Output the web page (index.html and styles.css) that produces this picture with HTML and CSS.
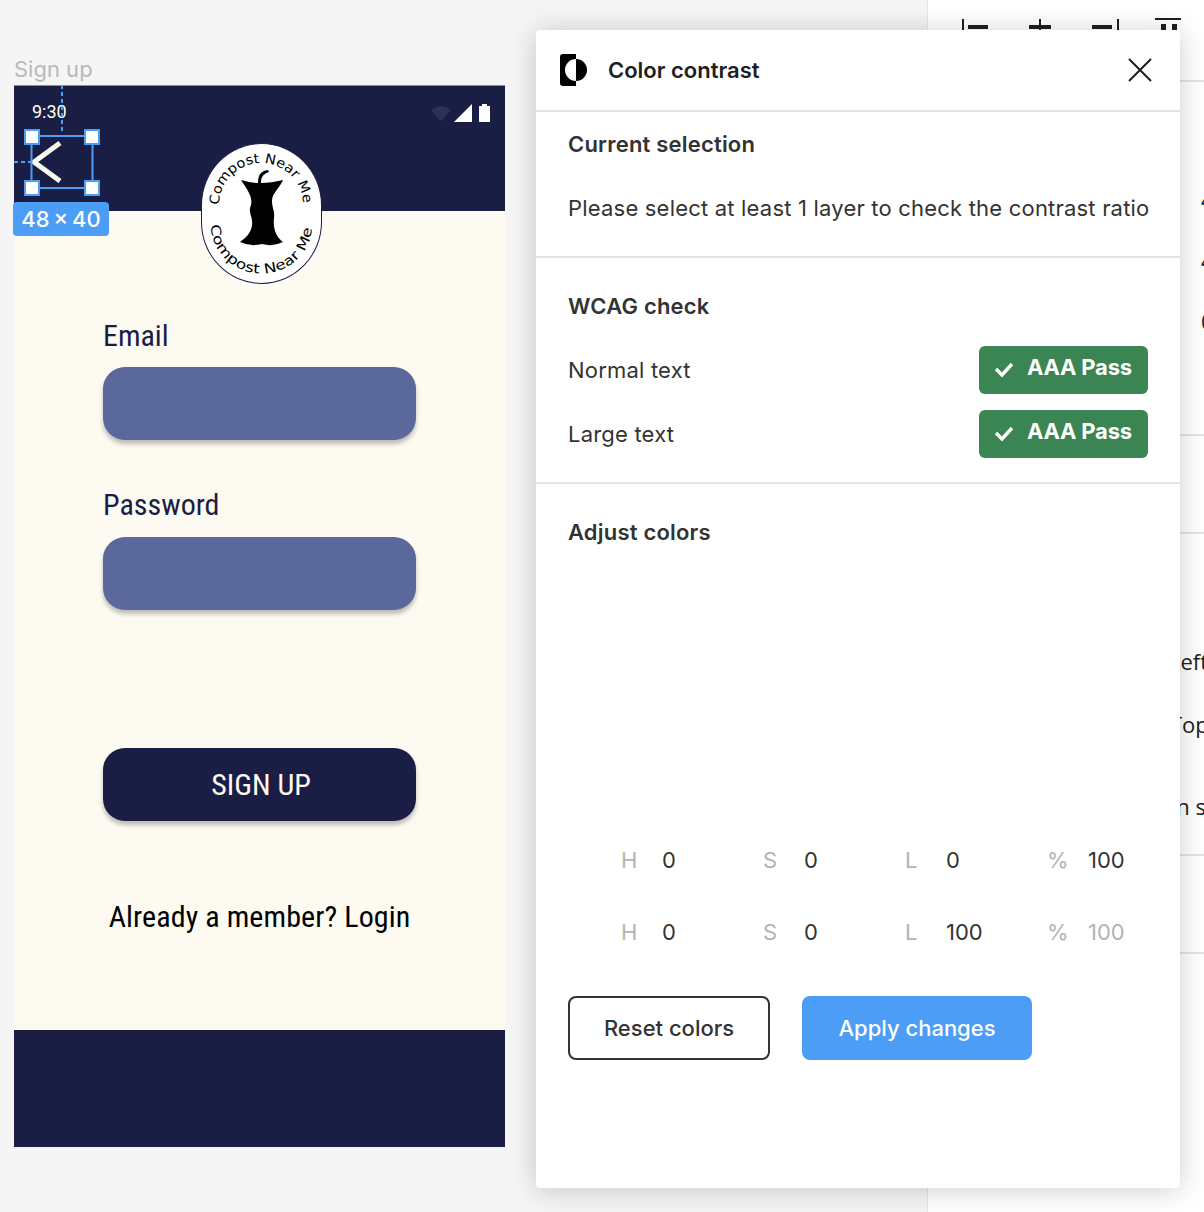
FILE: index.html
```html
<!DOCTYPE html>
<html lang="en">

<head>
    <meta charset="UTF-8">
    <meta name="viewport" content="width=device-width, initial-scale=1.0">
    <title>Sign up - Color contrast</title>
    <link rel="stylesheet" href="styles.css">
</head>

<body>
    <!-- Right properties panel, mostly behind the plugin window -->
    <aside class="side-panel">
        <div class="side-tools">
            <svg class="tool-icons" width="276" height="40" viewBox="0 0 276 40" fill="#1e1e1e">
                <rect x="34" y="19" width="2" height="11"/>
                <rect x="40" y="25" width="20" height="4"/>
                <rect x="101" y="25" width="22" height="4"/>
                <rect x="111" y="19" width="2" height="11"/>
                <rect x="164" y="25" width="20" height="4"/>
                <rect x="189" y="19" width="2" height="11"/>
                <rect x="227" y="18" width="26" height="2"/>
                <rect x="233" y="24" width="5" height="8"/>
                <rect x="244" y="24" width="5" height="8"/>
            </svg>
        </div>
        <div class="side-section side-section-top">
            <span class="peek peek-a">4</span>
            <span class="peek peek-b">4</span>
            <span class="peek peek-c">0</span>
        </div>
        <div class="side-section side-section-thin"></div>
        <div class="side-section side-section-text">
            <span class="behind behind-left">Left</span>
            <span class="behind behind-top">Top</span>
            <span class="behind behind-design">Design system</span>
        </div>
        <div class="side-section side-section-thin"></div>
    </aside>

    <!-- Artboard -->
    <div class="frame-title">Sign up</div>
    <div class="artboard">
        <header class="app-header">
            <span class="status-time">9:30</span>
            <div class="status-icons">
                <svg width="20" height="18" viewBox="0 0 22 18"><path d="M0 6 Q11 -3 22 6 L11 18 Z" fill="#2d3157"/></svg>
                <svg width="18" height="18" viewBox="0 0 18 18"><path d="M18 0 V18 H0 Z" fill="#fff"/></svg>
                <svg width="11" height="18" viewBox="0 0 11 18"><path d="M3 2 V0 H8 V2 H11 V18 H0 V2 Z" fill="#fff"/></svg>
            </div>
        </header>
        <main class="app-form">
            <label class="field-label">Email</label>
            <div class="field-input"></div>
            <label class="field-label field-label-next">Password</label>
            <div class="field-input"></div>
            <div class="signup-btn">SIGN UP</div>
            <p class="login-text">Already a member? Login</p>
        </main>
        <footer class="app-footer"></footer>

        <!-- Logo sits over the header edge -->
        <div class="logo">
            <svg width="121" height="141" viewBox="0 0 121 141">
                <defs>
                    <path id="arc-top" d="M18 62 A 42 42 0 0 1 102 62"/>
                    <path id="arc-bottom" d="M10 82 A 50 48 0 0 0 111 82"/>
                </defs>
                <text class="logo-text"><textPath href="#arc-top" textLength="130" lengthAdjust="spacingAndGlyphs">Compost Near Me</textPath></text>
                <text class="logo-text"><textPath href="#arc-bottom" textLength="152" lengthAdjust="spacingAndGlyphs">Compost Near Me</textPath></text>
                <path d="M40 37 Q50 40 57 40 C57 33 59 28 67 27 L68 29 C62 31 60 34 60 40 Q70 40 82 37 C78 46 71 50 71 58 C71 65 74 68 73 75 C72 84 74 93 82 99 Q72 104 61 101 Q50 104 39 99 C48 93 52 86 51 78 C51 72 47 70 50 62 C52 54 46 46 40 37 Z" fill="#000"/>
            </svg>
        </div>

        <!-- Back chevron with the selection overlay -->
        <svg class="selection" width="110" height="120" viewBox="0 0 110 120">
            <path d="M46 58 L20 77 L46 96" fill="none" stroke="#fdfaf1" stroke-width="5"/>
            <path d="M48 0 V47 M0 77 H17" fill="none" stroke="#4c9df5" stroke-width="2" stroke-dasharray="4 3"/>
            <rect x="17.5" y="51" width="61" height="52" fill="none" stroke="#4c9df5" stroke-width="2"/>
            <rect class="handle" x="11" y="45" width="14" height="14"/>
            <rect class="handle" x="71" y="45" width="14" height="14"/>
            <rect class="handle" x="11" y="96" width="14" height="14"/>
            <rect class="handle" x="71" y="96" width="14" height="14"/>
        </svg>
        <div class="size-badge">48 × 40</div>
    </div>

    <!-- Plugin window -->
    <section class="plugin">
        <div class="plugin-head">
            <svg width="28" height="32" viewBox="0 0 28 32">
                <path d="M3 0 H16 V32 H3 Q0 32 0 29 V3 Q0 0 3 0 Z" fill="#000"/>
                <path d="M16 5 A 11 11 0 0 0 16 27 Z" fill="#fff"/>
                <path d="M16 5 A 11 11 0 0 1 16 27 Z" fill="#000"/>
            </svg>
            <h1>Color contrast</h1>
            <svg class="close-icon" width="24" height="24" viewBox="0 0 24 24">
                <path d="M1 1 L23 23 M23 1 L1 23" stroke="#1e1e1e" stroke-width="2" fill="none"/>
            </svg>
        </div>

        <div class="plugin-section section-selection">
            <h2>Current selection</h2>
            <p class="selection-note">Please select at least 1 layer to check the contrast ratio</p>
        </div>

        <div class="plugin-section section-wcag">
            <h2>WCAG check</h2>
            <div class="wcag-row wcag-row-first">
                <span>Normal text</span>
                <span class="pass-badge">
                    <svg width="20" height="16" viewBox="0 0 20 16"><path d="M2 8 L8 14 L18 3" fill="none" stroke="#fff" stroke-width="3.4"/></svg>
                    AAA Pass
                </span>
            </div>
            <div class="wcag-row">
                <span>Large text</span>
                <span class="pass-badge">
                    <svg width="20" height="16" viewBox="0 0 20 16"><path d="M2 8 L8 14 L18 3" fill="none" stroke="#fff" stroke-width="3.4"/></svg>
                    AAA Pass
                </span>
            </div>
        </div>

        <div class="plugin-section section-adjust">
            <h2>Adjust colors</h2>
            <div class="hsl-row hsl-row-first">
                <div class="hsl-cell"><span class="hsl-key">H</span><span>0</span></div>
                <div class="hsl-cell"><span class="hsl-key">S</span><span>0</span></div>
                <div class="hsl-cell"><span class="hsl-key">L</span><span>0</span></div>
                <div class="hsl-cell"><span class="hsl-key">%</span><span>100</span></div>
            </div>
            <div class="hsl-row">
                <div class="hsl-cell"><span class="hsl-key">H</span><span>0</span></div>
                <div class="hsl-cell"><span class="hsl-key">S</span><span>0</span></div>
                <div class="hsl-cell"><span class="hsl-key">L</span><span>100</span></div>
                <div class="hsl-cell"><span class="hsl-key">%</span><span class="hsl-key">100</span></div>
            </div>
            <div class="plugin-actions">
                <button class="btn-reset">Reset colors</button>
                <button class="btn-apply">Apply changes</button>
            </div>
        </div>
    </section>
</body>

</html>
```

FILE: styles.css
```css
* {
    box-sizing: border-box;
    margin: 0;
    padding: 0;
}

body {
    position: relative;
    width: 1204px;
    height: 1212px;
    overflow: hidden;
    background: #f5f5f5;
    font-family: Inter, sans-serif;
}

/* Right panel */

.side-panel {
    position: absolute;
    top: 0;
    left: 927px;
    width: 277px;
    height: 1212px;
    background: #fff;
    border-left: 1px solid #e5e5e5;
    font-family: "Open Sans", sans-serif;
    font-size: 22px;
    color: #222;
    white-space: nowrap;
    overflow: hidden;
}

.side-tools {
    height: 82px;
    border-bottom: 2px solid #e5e5e5;
}

.tool-icons {
    display: block;
}

.side-section {
    border-bottom: 2px solid #e5e5e5;
    position: relative;
}

.side-section-top {
    height: 354px;
}

.side-section-thin {
    height: 98px;
}

.side-section-text {
    height: 322px;
}

.peek,
.behind {
    position: absolute;
}

.peek-a {
    top: 102px;
    left: 273px;
}

.peek-b {
    top: 163px;
    left: 273px;
}

.peek-c {
    top: 224px;
    left: 273px;
}

.behind-left {
    top: 112px;
    left: 241px;
}

.behind-top {
    top: 175px;
    left: 242px;
}

.behind-design {
    top: 257px;
    left: 192px;
}

/* Artboard */

.frame-title {
    position: absolute;
    top: 56px;
    left: 14px;
    font-size: 22px;
    line-height: 26px;
    color: #b9b9b9;
}

.artboard {
    position: absolute;
    top: 85px;
    left: 14px;
    width: 491px;
    height: 1062px;
    display: flex;
    flex-direction: column;
    font-family: "Roboto Condensed", "Liberation Sans Narrow", Roboto, sans-serif;
    font-stretch: condensed;
}

.app-header {
    height: 126px;
    background: #1a1e45;
    border-top: 1px solid #8c8ea0;
    display: flex;
    justify-content: space-between;
    align-items: flex-start;
    padding: 16px 15px 0 18px;
}

.status-time {
    font-family: Roboto, sans-serif;
    font-stretch: normal;
    font-size: 18px;
    line-height: 20px;
    color: #fff;
}

.status-icons {
    display: flex;
    gap: 3px;
    margin-top: 2px;
}

.status-icons svg:last-child {
    margin-left: 4px;
}

.app-form {
    flex: 1;
    background: #fdfaf1;
    padding: 107px 89px 0 89px;
    color: #1a1e45;
}

.field-label {
    display: block;
    font-size: 30px;
    line-height: 36px;
    margin-bottom: 13px;
}

.field-label-next {
    margin-top: 47px;
    margin-bottom: 14px;
}

.field-input {
    height: 73px;
    background: #5a689b;
    border-radius: 22px;
    box-shadow: 0 4px 4px rgba(0, 0, 0, 0.25);
}

.signup-btn {
    height: 73px;
    margin-top: 138px;
    padding-left: 3px;
    background: #1a1e45;
    border-radius: 22px;
    box-shadow: 0 4px 4px rgba(0, 0, 0, 0.25);
    color: #fdfaf1;
    font-size: 30px;
    line-height: 73px;
    text-align: center;
}

.login-text {
    margin-top: 78px;
    font-size: 30px;
    letter-spacing: 0.1px;
    line-height: 36px;
    color: #000;
    text-align: center;
    white-space: nowrap;
}

.app-footer {
    height: 117px;
    background: #1a1e45;
}

.logo {
    position: absolute;
    top: 58px;
    left: 187px;
    width: 121px;
    height: 141px;
    background: #fff;
    border: 1px solid #1a1e45;
    border-radius: 50% / 44%;
}

.logo svg {
    display: block;
    margin: -1px;
}

.logo-text {
    font-family: "DejaVu Sans", sans-serif;
    font-stretch: normal;
    font-size: 13.5px;
    fill: #000;
}

.selection {
    position: absolute;
    top: 0;
    left: 0;
}

.handle {
    fill: #fff;
    stroke: #4c9df5;
    stroke-width: 2;
}

.size-badge {
    position: absolute;
    top: 117px;
    left: -1px;
    width: 96px;
    height: 34px;
    background: #4c9df5;
    border-radius: 4px;
    color: #fff;
    font-family: Inter, sans-serif;
    font-stretch: normal;
    font-size: 22px;
    font-weight: 500;
    word-spacing: -2px;
    line-height: 34px;
    text-align: center;
}

/* Plugin window */

.plugin {
    position: absolute;
    top: 30px;
    left: 536px;
    width: 644px;
    height: 1158px;
    background: #fff;
    border-radius: 4px;
    box-shadow: 0 2px 28px rgba(0, 0, 0, 0.2);
    color: #333;
    font-size: 22px;
}

.plugin-head {
    height: 82px;
    border-bottom: 2px solid #e5e5e5;
    display: flex;
    align-items: center;
    padding: 0 28px 0 24px;
}

.plugin-head h1 {
    flex: 1;
    margin-left: 20px;
    font-size: 22px;
    font-weight: 600;
    line-height: 26px;
    color: #1e1e1e;
}

.close-icon {
    display: block;
}

.plugin-section {
    padding: 0 32px;
    border-bottom: 2px solid #e5e5e5;
    letter-spacing: 0.2px;
}

.plugin-section:last-child {
    border-bottom: none;
}

.plugin-section h2 {
    font-size: 22px;
    font-weight: 600;
    line-height: 26px;
}

.section-selection {
    height: 146px;
    padding-top: 19px;
}

.selection-note {
    margin-top: 38px;
    line-height: 26px;
    white-space: nowrap;
}

.section-wcag {
    height: 226px;
    padding-top: 35px;
}

.wcag-row {
    display: flex;
    justify-content: space-between;
    align-items: center;
    margin-top: 16px;
}

.wcag-row-first {
    margin-top: 27px;
}

.pass-badge {
    width: 169px;
    height: 48px;
    display: flex;
    align-items: center;
    gap: 13px;
    padding: 0 0 7px 15px;
    background: #3a8553;
    border-radius: 6px;
    color: #fff;
    font-weight: 700;
    letter-spacing: -0.2px;
}

.pass-badge svg {
    margin-top: 5px;
}

.section-adjust {
    padding-top: 35px;
}

.hsl-row {
    display: grid;
    grid-template-columns: repeat(4, 142px);
    margin-top: 40px;
    margin-left: 53px;
    height: 32px;
    line-height: 32px;
    letter-spacing: 0;
}

.hsl-row-first {
    margin-top: 299px;
}

.hsl-cell {
    display: flex;
}

.hsl-key {
    color: #b3b3b3;
}

.hsl-cell .hsl-key:first-child {
    width: 41px;
}

.plugin-actions {
    display: flex;
    gap: 32px;
    margin-top: 48px;
}

.plugin-actions button {
    height: 64px;
    border-radius: 8px;
    font-family: Inter, sans-serif;
    font-size: 22px;
    font-weight: 500;
}

.btn-reset {
    width: 202px;
    background: #fff;
    border: 2px solid #333;
    color: #333;
}

.btn-apply {
    width: 230px;
    background: #4c9df5;
    border: none;
    color: #fff;
}
```
